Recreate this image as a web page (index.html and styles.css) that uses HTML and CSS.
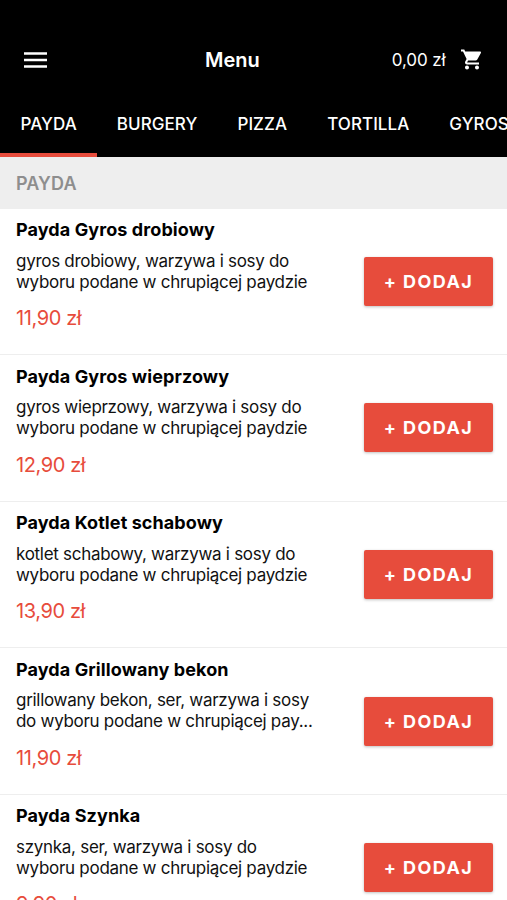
FILE: index.html
```html
<!DOCTYPE html>
<html lang="pl">
<head>
<meta charset="utf-8">
<title>Menu</title>
<link rel="stylesheet" href="styles.css">
</head>
<body>
<main class="app">
  <header class="header">
    <div class="topbar">
      <svg class="menu-icon" viewBox="0 0 23 16"><path d="M0 1.500h23M0 8h23M0 14.500h23" stroke="#fff" stroke-width="2.400"/></svg>
      <h1 class="title">Menu</h1>
      <div class="cart">
        <span class="total">0,00 zł</span>
        <svg class="cart-icon" viewBox="1 2 21 20"><path fill="#fff" d="M7 18c-1.1 0-1.99.9-1.99 2S5.900 22 7 22s2-.9 2-2-.9-2-2-2zM1 2v2h2l3.600 7.590-1.350 2.450c-.16.28-.25.61-.25.960 0 1.100.9 2 2 2h12v-2H7.420c-.14 0-.25-.11-.25-.25l.03-.12.9-1.630h7.450c.75 0 1.410-.41 1.750-1.030l3.580-6.490c.08-.14.12-.31.12-.48 0-.55-.45-1-1-1H5.210l-.94-2H1zm16 16c-1.100 0-1.990.9-1.990 2s.89 2 1.990 2 2-.9 2-2-.9-2-2-2z"/></svg>
      </div>
    </div>
    <nav class="tabs">
      <a class="tab active">PAYDA</a><a class="tab">BURGERY</a><a class="tab">PIZZA</a><a class="tab">TORTILLA</a><a class="tab">GYROS</a>
    </nav>
  </header>
  <h2 class="section">PAYDA</h2>
  <ul class="list">
    <li class="item"><div class="info"><h3 class="name">Payda Gyros drobiowy</h3><p class="desc">gyros drobiowy, warzywa i sosy do<br>wyboru podane w chrupiącej paydzie</p><p class="price">11,90 zł</p></div><button class="add">+ DODAJ</button></li>
    <li class="item"><div class="info"><h3 class="name">Payda Gyros wieprzowy</h3><p class="desc">gyros wieprzowy, warzywa i sosy do<br>wyboru podane w chrupiącej paydzie</p><p class="price">12,90 zł</p></div><button class="add">+ DODAJ</button></li>
    <li class="item"><div class="info"><h3 class="name">Payda Kotlet schabowy</h3><p class="desc">kotlet schabowy, warzywa i sosy do<br>wyboru podane w chrupiącej paydzie</p><p class="price">13,90 zł</p></div><button class="add">+ DODAJ</button></li>
    <li class="item"><div class="info"><h3 class="name">Payda Grillowany bekon</h3><p class="desc">grillowany bekon, ser, warzywa i sosy<br>do wyboru podane w chrupiącej pay...</p><p class="price">11,90 zł</p></div><button class="add">+ DODAJ</button></li>
    <li class="item"><div class="info"><h3 class="name">Payda Szynka</h3><p class="desc">szynka, ser, warzywa i sosy do<br>wyboru podane w chrupiącej paydzie</p><p class="price">9,90 zł</p></div><button class="add">+ DODAJ</button></li>
  </ul>
</main>
</body>
</html>
```
FILE: styles.css
```css
* { box-sizing: border-box; margin: 0; padding: 0; }
body { font-family: Inter, "Liberation Sans", sans-serif; background: #fff; color: #000; }
.app { height: 900px; overflow: hidden; }
.header { background: #000; color: #fff; height: 157px; padding-top: 30px; }
.topbar { display: grid; grid-template-columns: 181px auto 1fr; align-items: center; height: 60px; padding: 0 25.500px 0 24px; }
.menu-icon { width: 23px; height: 16px; }
.title { font-size: 20px; font-weight: 600; }
.cart { display: flex; justify-content: flex-end; align-items: center; gap: 15px; }
.total { font-size: 17px; line-height: 20px; margin-top: -1px; letter-spacing: -0.1px; }
.cart-icon { width: 21px; height: 21px; margin-top: -1px; }
.tabs { display: flex; height: 67px; white-space: nowrap; }
.tab { flex: none; padding: 0 20px; font-size: 17px; font-weight: 500; line-height: 68px; height: 67px; letter-spacing: 0.07px; }
.tab:first-child { padding-left: 20.5px; }
.active { border-bottom: 4px solid #e74c3c; }
.section { height: 51.500px; padding-left: 16px; background: #eee; color: #8e8e8e; font-size: 18px; font-weight: 600; line-height: 53px; letter-spacing: 0.1px; }
.list { list-style: none; }
.item { display: flex; justify-content: space-between; align-items: center; height: 146.6px; padding: 0 14px 0 16px; border-bottom: 1px solid #eee; }
.info { align-self: flex-start; padding-top: 10.500px; white-space: nowrap; }
.name { font-size: 18px; font-weight: 700; line-height: 22px; letter-spacing: 0.09px; }
.desc { margin-top: 9.500px; font-size: 17px; line-height: 21px; letter-spacing: -0.29px; color: #111; }
.price { margin-top: 13.500px; font-size: 20px; line-height: 24px; letter-spacing: -0.4px; color: #e74c3c; }
.add { width: 129px; height: 49px; border: 0; border-radius: 2px; background: #e74c3c; color: #fff; font: 700 18px Inter, "Liberation Sans", sans-serif; letter-spacing: 1.4px; box-shadow: 0 1px 3px rgba(0,0,0,.25); }
```
